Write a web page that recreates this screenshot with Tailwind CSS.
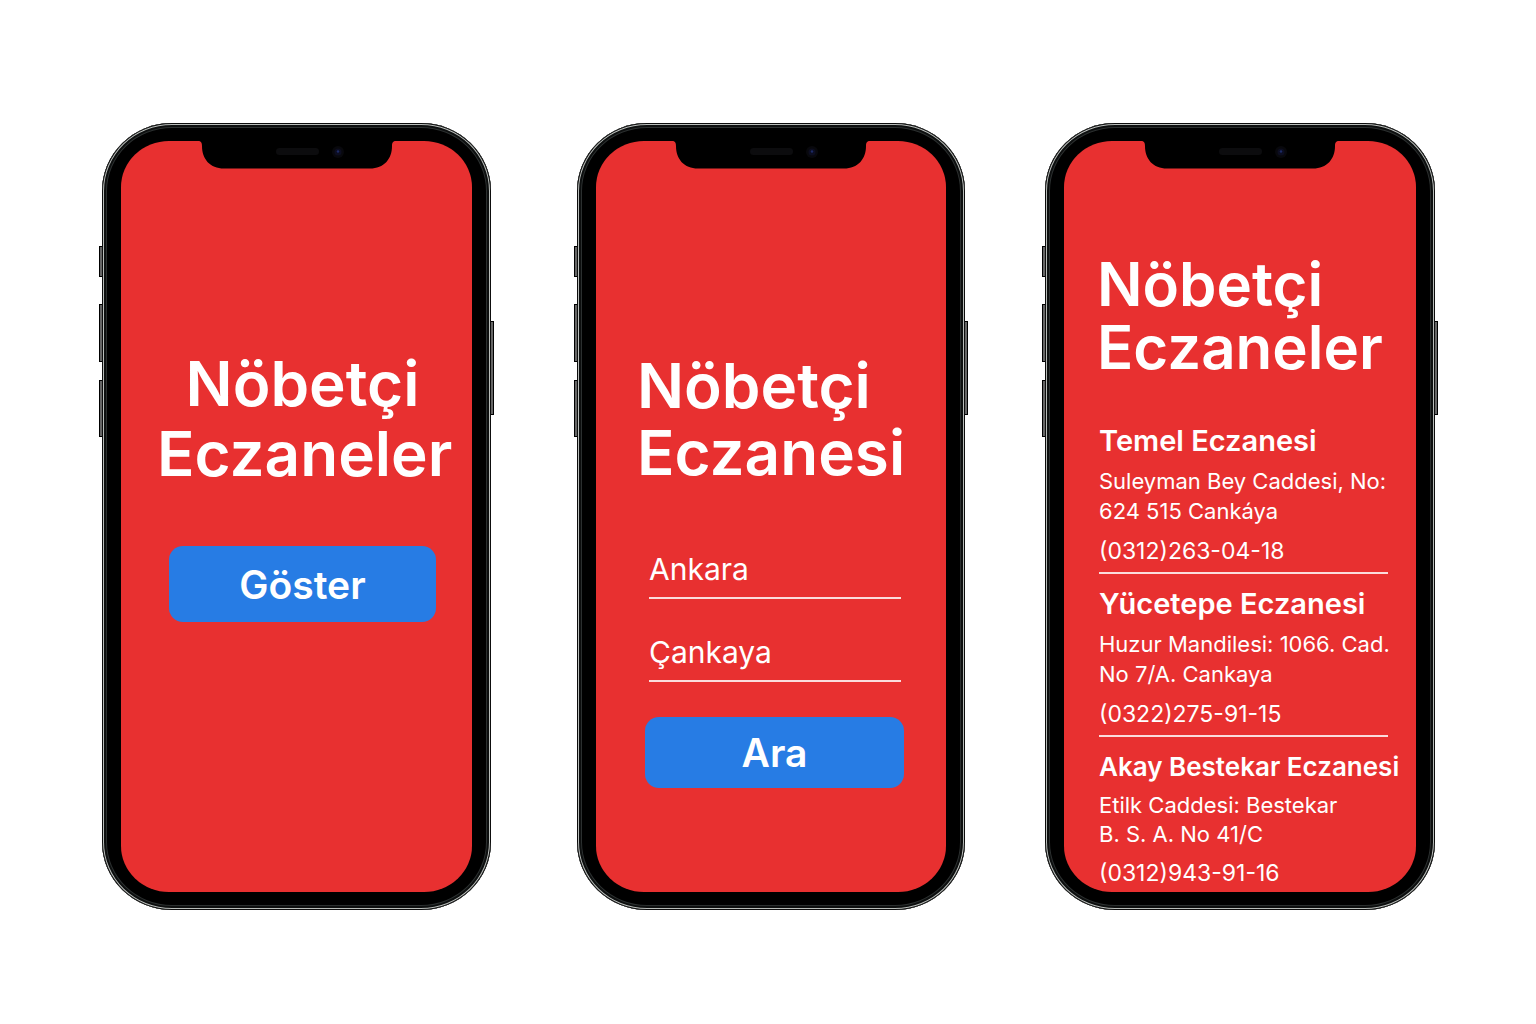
<!DOCTYPE html>
<html lang="tr">
<head>
<meta charset="utf-8">
<meta name="viewport" content="width=device-width, initial-scale=1">
<title>Nöbetçi Eczaneler</title>
<script src="https://cdn.jsdelivr.net/npm/@tailwindcss/browser@4"></script>
</head>
<body class="bg-white font-['Inter',sans-serif] text-white">
<svg class="hidden" aria-hidden="true">
  <symbol id="notch" viewBox="0 0 198 28">
    <path d="M0 0H198C195 0 194 1.500 194 5C194 18 186 27.500 172 27.500H26C12 27.500 4 18 4 5C4 1.500 3 0 0 0Z" fill="#000"/>
    <rect x="78" y="7" width="43" height="7" rx="3.500" fill="#0c0c0e"/>
    <circle cx="140" cy="11" r="6" fill="#08080c"/>
    <circle cx="140" cy="11" r="3.500" fill="#0c0d20"/>
    <circle cx="140" cy="10.500" r="1.200" fill="#1c2a66"/>
  </symbol>
</svg>
<main class="grid min-h-screen grid-cols-[minmax(0,475fr)_minmax(0,468fr)_minmax(0,390fr)] items-center pt-[9px] pr-[101px] pl-[102px]">

  <div class="pr-[86px]">
    <section class="relative rounded-[70px/68px] bg-black px-[19px] py-[18px] shadow-[inset_0_0_0_1px_#0d0d0d,inset_0_0_0_2px_#b9bdba,inset_0_0_0_4px_#0d0f0f,inset_0_0_0_5px_#2b2f2f]">
      <span class="absolute top-[123px] -left-[3px] h-[31px] w-[3px] border border-r-0 border-black bg-[#666]"></span>
      <span class="absolute top-[181px] -left-[3px] h-[58px] w-[3px] border border-r-0 border-black bg-[#666]"></span>
      <span class="absolute top-[257px] -left-[3px] h-[57px] w-[3px] border border-r-0 border-black bg-[#666]"></span>
      <span class="absolute top-[198px] -right-[3px] h-[94px] w-[3px] border border-l-0 border-black bg-[#666]"></span>
      <div class="min-h-[751px] rounded-[48px/46px] bg-[#e83030]">
        <svg class="mx-auto block h-7 w-[198px]" aria-hidden="true"><use href="#notch"/></svg>
        <div class="pt-[180px] pr-6 pl-9">
          <h1 class="text-center text-[62px] leading-[70px] font-semibold whitespace-nowrap">Nöbetçi<br>Eczaneler</h1>
          <div class="mt-[57px] px-3">
            <button type="button" class="h-[76px] w-full rounded-[14px] bg-[#277ce4] text-[39px] leading-none font-semibold">Göster</button>
          </div>
        </div>
      </div>
    </section>
  </div>

  <div class="pr-[80px]">
    <section class="relative rounded-[70px/68px] bg-black px-[19px] py-[18px] shadow-[inset_0_0_0_1px_#0d0d0d,inset_0_0_0_2px_#b9bdba,inset_0_0_0_4px_#0d0f0f,inset_0_0_0_5px_#2b2f2f]">
      <span class="absolute top-[123px] -left-[3px] h-[31px] w-[3px] border border-r-0 border-black bg-[#666]"></span>
      <span class="absolute top-[181px] -left-[3px] h-[58px] w-[3px] border border-r-0 border-black bg-[#666]"></span>
      <span class="absolute top-[257px] -left-[3px] h-[57px] w-[3px] border border-r-0 border-black bg-[#666]"></span>
      <span class="absolute top-[198px] -right-[3px] h-[94px] w-[3px] border border-l-0 border-black bg-[#666]"></span>
      <div class="min-h-[751px] rounded-[48px/46px] bg-[#e83030]">
        <svg class="mx-auto block h-7 w-[198px]" aria-hidden="true"><use href="#notch"/></svg>
        <form class="pt-[183px] pr-[42px] pl-[49px]">
          <h1 class="-ml-2 text-[62px] leading-[67px] font-semibold whitespace-nowrap">Nöbetçi<br>Eczanesi</h1>
          <div class="mt-[65px] flex flex-col gap-[35px]">
            <div class="flex flex-col gap-[35px] pr-[3px] pl-1">
              <input type="text" aria-label="İl" value="Ankara" class="h-12 w-full border-b-2 border-[#fbdcdc] bg-transparent pb-[10px] text-[30px] leading-none outline-none">
              <input type="text" aria-label="İlçe" value="Çankaya" class="h-12 w-full border-b-2 border-[#fbdcdc] bg-transparent pb-[10px] text-[30px] leading-none outline-none">
            </div>
            <button type="button" class="h-[71px] w-full rounded-[14px] bg-[#277ce4] text-[39px] leading-none font-semibold">Ara</button>
          </div>
        </form>
      </div>
    </section>
  </div>

  <div>
    <section class="relative rounded-[70px/68px] bg-black px-[19px] py-[18px] shadow-[inset_0_0_0_1px_#0d0d0d,inset_0_0_0_2px_#b9bdba,inset_0_0_0_4px_#0d0f0f,inset_0_0_0_5px_#2b2f2f]">
      <span class="absolute top-[123px] -left-[3px] h-[31px] w-[3px] border border-r-0 border-black bg-[#666]"></span>
      <span class="absolute top-[181px] -left-[3px] h-[58px] w-[3px] border border-r-0 border-black bg-[#666]"></span>
      <span class="absolute top-[257px] -left-[3px] h-[57px] w-[3px] border border-r-0 border-black bg-[#666]"></span>
      <span class="absolute top-[198px] -right-[3px] h-[94px] w-[3px] border border-l-0 border-black bg-[#666]"></span>
      <div class="min-h-[751px] rounded-[48px/46px] bg-[#e83030]">
        <svg class="mx-auto block h-7 w-[198px]" aria-hidden="true"><use href="#notch"/></svg>
        <div class="pt-[84px] pr-7 pl-[35px] whitespace-nowrap">
          <h1 class="-ml-[2px] text-[60px] leading-[63px] font-semibold">Nöbetçi<br>Eczaneler</h1>
          <article class="mt-11 border-b-2 border-[#fbdcdc] pb-[6px]">
            <h2 class="text-[29px] leading-9 font-semibold">Temel Eczanesi</h2>
            <p class="mt-[7px] text-[22px] leading-[30px]">Suleyman Bey Caddesi, No:<br>624 515 Cankáya</p>
            <p class="mt-[10px] text-[23px] leading-[30px]">(0312)263-04-18</p>
          </article>
          <article class="mt-3 border-b-2 border-[#fbdcdc] pb-[6px]">
            <h2 class="text-[29px] leading-9 font-semibold">Yücetepe Eczanesi</h2>
            <p class="mt-[7px] text-[22px] leading-[30px]">Huzur Mandilesi: 1066. Cad.<br>No 7/A. Cankaya</p>
            <p class="mt-[10px] text-[23px] leading-[30px]">(0322)275-91-15</p>
          </article>
          <article class="mt-3">
            <h2 class="text-[26px] leading-9 font-semibold">Akay Bestekar Eczanesi</h2>
            <p class="mt-[6px] text-[22px] leading-[29px]">Etilk Caddesi: Bestekar<br>B. S. A. No 41/C</p>
            <p class="mt-[10px] text-[23px] leading-[29px]">(0312)943-91-16</p>
          </article>
        </div>
      </div>
    </section>
  </div>

</main>
</body>
</html>
